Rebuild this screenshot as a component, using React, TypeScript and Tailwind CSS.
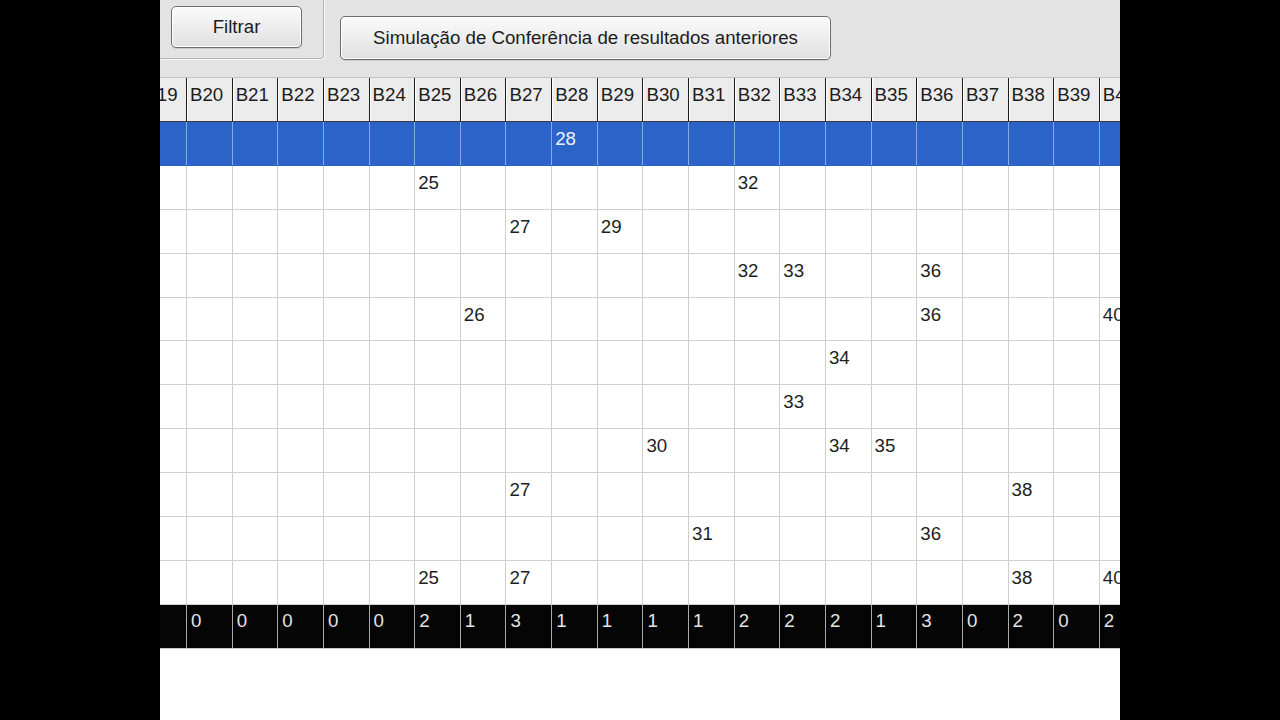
import React from "react";

const COLS = Array.from({ length: 22 }, (_, i) => 19 + i);

const ROWS: number[][] = [
  [28],
  [25, 32],
  [27, 29],
  [32, 33, 36],
  [26, 36, 40],
  [34],
  [33],
  [30, 34, 35],
  [27, 38],
  [31, 36],
  [25, 27, 38, 40],
];

const totals = COLS.map((c) => ROWS.filter((r) => r.includes(c)).length);

export default function App() {
  return (
    <div className="flex h-[720px] w-[1280px] overflow-hidden bg-black font-['Liberation_Sans',Arial,sans-serif]">
      <div className="w-[160px] shrink-0 bg-black" />
      <div className="flex w-[960px] shrink-0 flex-col overflow-hidden bg-white">
        {/* top panel */}
        <div className="flex h-[77px] shrink-0 items-start bg-[#e3e3e3]">
          <div className="h-[59px] w-[164px] shrink-0 rounded-br-[4px] border-b border-r border-[#b4b4b4] pl-[11px] pt-[6px] shadow-[1px_1px_0_#f8f8f8]">
            <button className="h-[42px] w-[131px] rounded-[5px] border border-[#6e6e6e] bg-gradient-to-b from-[#fbfbfb] to-[#e0e0e0] text-[18.7px] text-[#1c1c1c] shadow-[inset_0_0_0_1px_#ffffff,0_1px_0_#c8c8c8]">
              Filtrar
            </button>
          </div>
          <button className="ml-[16px] mt-[16px] h-[44px] w-[491px] shrink-0 rounded-[5px] border border-[#6e6e6e] bg-gradient-to-b from-[#fbfbfb] to-[#e0e0e0] text-[18.7px] text-[#1c1c1c] shadow-[inset_0_0_0_1px_#ffffff,0_1px_0_#c8c8c8]">
            Simulação de Conferência de resultados anteriores
          </button>
        </div>

        {/* grid */}
        <div className="shrink-0 overflow-hidden">
          <div className="ml-[-18.65px] w-max">
            {/* header */}
            <div className="flex h-[45px] border-b border-t border-b-[#3c3c3c] border-t-[#c4c4c4] bg-[#ececec]">
              {COLS.map((c) => (
                <div
                  key={c}
                  className="h-full w-[45.65px] shrink-0 border-r border-[#1e1e1e] pl-[3px] pt-[6px] text-[18.7px] leading-[22px] text-[#1c1c1c] shadow-[inset_1px_0_0_#ffffff]"
                >
                  B{c}
                </div>
              ))}
            </div>
            {/* body rows */}
            {ROWS.map((r, ri) => {
              const sel = ri === 0;
              return (
                <div
                  key={ri}
                  className={
                    sel
                      ? "flex h-[43.9px] border-b border-[#2b63c9] bg-[#2b63c9]"
                      : "flex h-[43.9px] border-b border-[#cfcfcf] bg-white"
                  }
                >
                  {COLS.map((c) => (
                    <div
                      key={c}
                      className={
                        sel
                          ? "h-full w-[45.65px] shrink-0 border-r border-[#86a9e8] pl-[3px] pt-[6px] text-[18.7px] leading-[22px] text-[#eef3ff]"
                          : "h-full w-[45.65px] shrink-0 border-r border-[#cfcfcf] pl-[3px] pt-[6px] text-[18.7px] leading-[22px] text-[#1e1e1e]"
                      }
                    >
                      {r.includes(c) ? c : ""}
                    </div>
                  ))}
                </div>
              );
            })}
            {/* totals */}
            <div className="flex h-[44px] border-b border-[#c8c8c8] bg-[#050505]">
              {COLS.map((c, i) => (
                <div
                  key={c}
                  className="h-full w-[45.65px] shrink-0 border-r border-[#a9a9a9] pl-[4px] pt-[5px] text-[18.7px] leading-[22px] text-[#e4e4e4]"
                >
                  {totals[i]}
                </div>
              ))}
            </div>
          </div>
        </div>
        <div className="flex-1 bg-white" />
      </div>
      <div className="w-[160px] shrink-0 bg-black" />
    </div>
  );
}
